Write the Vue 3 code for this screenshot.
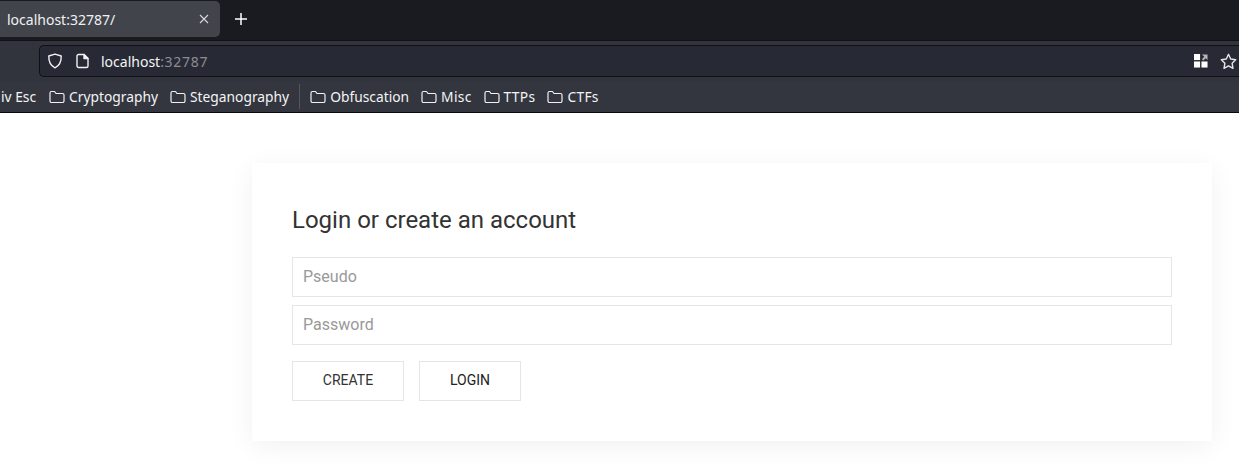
<script setup>
const bookmarksA = ['Cryptography', 'Steganography']
const bookmarksB = ['Obfuscation', 'Misc', 'TTPs', 'CTFs']
</script>

<template>
  <div class="page">
    <header class="chrome">
      <div class="tabstrip">
        <div class="tab">
          <span class="tab-title">localhost:32787/</span>
          <svg class="tab-close" width="10" height="10" viewBox="0 0 10 10"><path d="M1 1l8 8M9 1l-8 8" /></svg>
        </div>
        <svg class="newtab" width="14" height="14" viewBox="0 0 14 14"><path d="M7 1v12M1 7h12" /></svg>
      </div>
      <div class="navbar">
        <div class="urlbar">
          <svg class="shield" width="16" height="16" viewBox="0 0 16 16"><path d="M8 1.2 14.2 3c.2 5.500-1.700 9.600-6.200 11.800C3.500 12.600 1.600 8.500 1.800 3z" /></svg>
          <svg class="pageicon" width="14" height="16" viewBox="0 0 14 16"><path d="M2.500 1.500h5.500l4 4v7.500a1.500 1.500 0 0 1-1.500 1.500h-8A1.500 1.500 0 0 1 1 13V3a1.500 1.500 0 0 1 1.500-1.500z" /><path class="fold" d="M8 1.500l4 4H8z" /></svg>
          <span class="url">localhost<span class="url-dim">:32787</span></span>
          <span class="spacer"></span>
          <svg class="grid" width="14" height="14" viewBox="0 0 15 15">
            <rect x="0" y="0" width="6.500" height="6.500" fill="#fff" />
            <rect x="0" y="8" width="6.500" height="6.500" fill="#fff" />
            <rect x="8" y="8" width="6.500" height="6.500" fill="#fff" />
            <path d="M8.500 0.500h6v6l-2-2-2.500 2.500-1.500-1.500 2.500-2.500z" fill="#b5b5b8" />
          </svg>
          <svg class="star" width="17" height="17" viewBox="0 0 17 17"><path d="M8.500 1.300l2.200 4.700 5 .7-3.600 3.500.9 5.100-4.500-2.500-4.500 2.500.9-5.100L1.300 6.700l5-.7z" /></svg>
        </div>
      </div>
      <div class="bookmarks">
        <span class="clipped">iv Esc</span>
        <span v-for="b in bookmarksA" :key="b" class="bm">
          <svg width="16" height="14" viewBox="0 0 16 14"><path d="M1 3a1.500 1.500 0 0 1 1.500-1.500h3l1.500 2h6.500A1.500 1.500 0 0 1 15 5v6a1.500 1.500 0 0 1-1.500 1.500h-11A1.500 1.500 0 0 1 1 11z" /></svg>{{ b }}
        </span>
        <span class="sep"></span>
        <span v-for="b in bookmarksB" :key="b" class="bm">
          <svg width="16" height="14" viewBox="0 0 16 14"><path d="M1 3a1.500 1.500 0 0 1 1.500-1.500h3l1.500 2h6.500A1.500 1.500 0 0 1 15 5v6a1.500 1.500 0 0 1-1.500 1.500h-11A1.500 1.500 0 0 1 1 11z" /></svg>{{ b }}
        </span>
      </div>
    </header>

    <main class="content">
      <section class="card">
        <h2 class="title">Login or create an account</h2>
        <input class="field" type="text" placeholder="Pseudo" />
        <input class="field" type="password" placeholder="Password" />
        <div class="actions">
          <button class="btn create" type="button">CREATE</button>
          <button class="btn login" type="button">LOGIN</button>
        </div>
      </section>
    </main>
  </div>
</template>

<style>
html, body { margin: 0; background: #fff; overflow: hidden; }
</style>

<style scoped>
.page { width: 1239px; height: 468px; overflow: hidden; background: #fff; }
.chrome { font-family: "Noto Sans", sans-serif; color: #f4f4f6; }
.tabstrip { height: 41px; background: #1a1b20; display: flex; align-items: flex-start; box-sizing: border-box; border-bottom: 1px solid #111216; }
.tab { width: 220px; height: 36px; margin-top: 1px; background: #42444c; border-radius: 0 5px 5px 0; display: flex; align-items: center; box-sizing: border-box; padding: 0 11px 0 7px; }
.tab-title { flex: 1; font-size: 14px; color: #f0f0f2; white-space: nowrap; }
.tab-close path { stroke: #d8d8da; stroke-width: 1.100; fill: none; }
.newtab { margin: 12px 0 0 14px; }
.newtab path { stroke: #fff; stroke-width: 1.500; fill: none; }
.navbar { height: 40px; background: #31343c; box-sizing: border-box; padding: 4px 0 4px 39px; }
.urlbar { height: 32px; background: #272a35; border: 1px solid #0f1014; border-right: 0; border-radius: 5px 0 0 5px; box-sizing: border-box; display: flex; align-items: center; padding: 0 2px 0 7px; }
.shield { margin-right: 13px; }
.shield path { fill: none; stroke: #f1f1f3; stroke-width: 1.400; stroke-linejoin: round; }
.pageicon { margin-right: 11px; }
.pageicon path { fill: none; stroke: #f1f1f3; stroke-width: 1.400; stroke-linejoin: round; }
.pageicon .fold { fill: #f1f1f3; }
.url { font-size: 14px; color: #f4f4f6; }
.url-dim { color: #8c8d93; letter-spacing: 0.7px; }
.spacer { flex: 1; }
.grid { margin-right: 12px; }
.star path { fill: none; stroke: #e6e6e8; stroke-width: 1.400; stroke-linejoin: round; }
.bookmarks { height: 32px; background: #33363e; border-bottom: 1px solid #0a0a0d; box-sizing: border-box; display: flex; align-items: center; font-size: 13.800px; white-space: nowrap; overflow: hidden; }
.clipped { margin-left: 1px; margin-right: 13px; }
.bm { display: flex; align-items: center; gap: 4px; margin-right: 12px; }
.bm:nth-last-child(-n+3) { letter-spacing: 0.3px; }
.bm svg path { fill: none; stroke: #f1f1f3; stroke-width: 1.200; stroke-linejoin: round; }
.sep { width: 1px; height: 25px; background: #55575e; margin: 0 10px 0 -2px; }
.content { padding: 50px 0 0 252px; }
.card { width: 960px; box-sizing: border-box; padding: 40px; background: #fff; box-shadow: 0 5px 25px rgba(0, 0, 0, 0.06); height: 278px; }
.title { font-family: Roboto, sans-serif; font-weight: 400; font-size: 24px; line-height: 34px; margin: 0 0 20px; color: #333; }
.field { display: block; width: 100%; height: 40px; box-sizing: border-box; border: 1px solid #e5e5e5; padding: 0 10px 2px; margin: 0 0 8px; font-family: Roboto, sans-serif; font-size: 16px; color: #333; outline: none; background: #fff; }
.field::placeholder { color: #999; opacity: 1; }
.actions { display: flex; gap: 15px; margin-top: 16px; }
.btn { height: 40px; background: #fff; border: 1px solid #e5e5e5; padding: 0 0 2px; font-family: Roboto, sans-serif; font-size: 14px; color: #333; }
.create { width: 112px; }
.login { width: 102px; color: #222; }
</style>
